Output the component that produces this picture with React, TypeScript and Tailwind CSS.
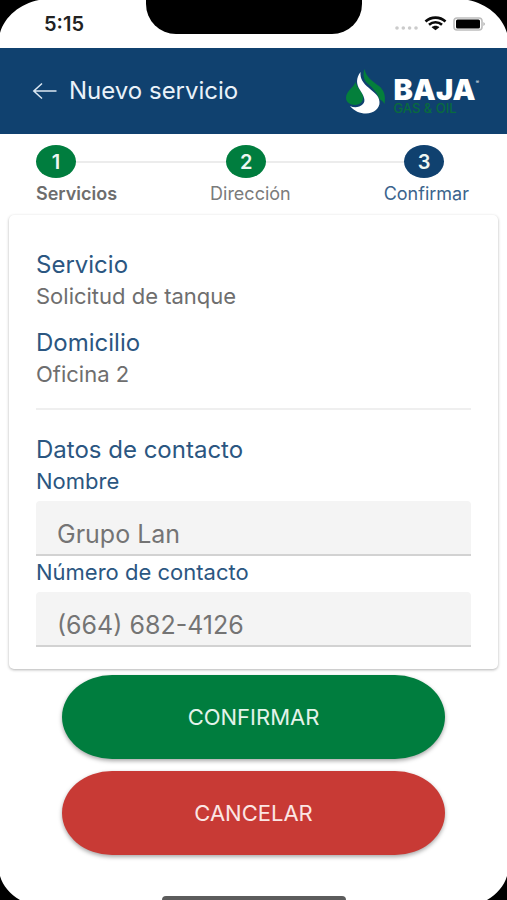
import { Fragment } from "react";

const steps = [
  { number: 1, label: "Servicios", circle: "bg-[#007d3e]", text: "font-semibold text-[#6d6d6d]" },
  { number: 2, label: "Dirección", circle: "bg-[#007d3e]", text: "text-[#7b7b7b]" },
  { number: 3, label: "Confirmar", circle: "bg-[#10416f]", text: "text-[#3b648d]" },
];

function StatusBar() {
  return (
    <div className="relative flex h-12 items-start justify-between pl-11 pr-[21px] pt-3">
      <span className="text-[20px] leading-6 font-semibold text-[#222]">5:15</span>
      <div className="absolute left-1/2 top-0 h-[34px] w-[216px] -translate-x-1/2 rounded-b-[30px] bg-black" />
      <svg width="92" height="24" viewBox="0 0 92 24" aria-hidden="true">
        <g fill="#cbcbcb">
          <circle cx="3" cy="16" r="1.800" />
          <circle cx="9.300" cy="16" r="1.800" />
          <circle cx="15.600" cy="16" r="1.800" />
          <circle cx="22" cy="16" r="1.800" />
        </g>
        <g fill="none" stroke="#0a0a0a" strokeWidth="2.600">
          <path d="M31.500 9.500C37 4.300 46 4.300 51.500 9.500" />
          <path d="M35 12.800C38.800 9.400 44.200 9.400 48 12.800" />
        </g>
        <path d="M37.600 15.200C39.800 13.200 43.200 13.200 45.400 15.200L41.500 18.300Z" fill="#0a0a0a" />
        <rect x="60" y="6" width="28" height="12" rx="3" fill="#fff" stroke="#bdbdbd" strokeWidth="1.600" />
        <rect x="62" y="7.600" width="24" height="9" rx="1.500" fill="#000" />
        <path d="M89.500 10Q92 12 89.500 14Z" fill="#9c9c9c" />
      </svg>
    </div>
  );
}

function Logo() {
  return (
    <div className="flex items-end gap-[7px]">
      <svg width="40" height="46" viewBox="0 0 40 46" aria-hidden="true">
        <path d="M9.500 14C8 19 0 23 0 30C0 34 4 37 9 37C14 37 18 33 17 28C16 23 11 20 9.500 14Z" fill="#047f3b" />
        <path d="M18.500 1C17 5 17 11 21 15C28 21 32 26 33 31C35 32 37 33 38.500 36C40 28 38 22 33 18C26 13 20 9 18.500 1Z" fill="#047f3b" />
        <path d="M14.500 4C10 10 10 16 14 22C18 28 20 33 17 36C13 40 8 40 4 38C8 43 14 45.500 20 45.500C28 45.500 34 40 33.500 34C33 27 28 25 23 20C17 15 14 11 14.500 4Z" fill="#fff" />
      </svg>
      <div>
        <div className="flex items-start">
          <span className="text-[29px] leading-6 font-black text-white">BAJA</span>
          <span className="text-[5px] leading-2 text-white">®</span>
        </div>
        <div className="text-[13px] leading-3 font-medium text-[#086b3e]">GAS &amp; OIL</div>
      </div>
    </div>
  );
}

function Header() {
  return (
    <header className="flex h-[86px] items-center justify-between bg-[#10416f] pl-8 pr-7">
      <div className="flex items-center gap-3">
        <button type="button" aria-label="Volver">
          <svg width="25" height="18" viewBox="0 0 25 18" fill="none" stroke="#dce8f3" strokeWidth="1.500" aria-hidden="true">
            <path d="M24.500 9H2M10 1.500L1.800 9L10 16.500" />
          </svg>
        </button>
        <h1 className="text-[24px] leading-7 text-[#eaf2f9]">Nuevo servicio</h1>
      </div>
      <Logo />
    </header>
  );
}

function Stepper() {
  return (
    <nav className="pt-[11px]" aria-label="Pasos">
      <div className="flex items-center pl-9 pr-[63px]">
        {steps.map((step, i) => (
          <Fragment key={step.number}>
            {i > 0 && <div className={i === 1 ? "h-[2px] flex-[12] bg-[#ececec]" : "h-[2px] flex-[11] bg-[#ececec]"} />}
            <span className={`flex h-[33px] w-10 items-center justify-center rounded-[50%] text-[20px] font-semibold text-[#eef6f2] ${step.circle}`}>
              {step.number}
            </span>
          </Fragment>
        ))}
      </div>
      <ol className="flex justify-between pl-9 pr-[38px] pt-1 text-[18px] leading-6">
        {steps.map((step) => (
          <li key={step.number} className={step.text}>{step.label}</li>
        ))}
      </ol>
    </nav>
  );
}

function Detail({ title, value }: { title: string; value: string }) {
  return (
    <div>
      <h2 className="text-[24px] leading-8 text-[#2b5681]">{title}</h2>
      <p className="text-[22px] leading-[30px] text-[#6e6e6e]">{value}</p>
    </div>
  );
}

function Field({ id, label, value, type }: { id: string; label: string; value: string; type: string }) {
  return (
    <div>
      <label htmlFor={id} className="block pb-1 text-[22px] leading-8 text-[#2b5681]">{label}</label>
      <input
        id={id}
        type={type}
        defaultValue={value}
        className="block h-[55px] w-full rounded-t-[4px] border-b-2 border-[#d2d2d2] bg-[#f4f4f4] px-[21px] pt-3 text-[25px] text-[#747474] outline-none"
      />
    </div>
  );
}

function Corners() {
  return (
    <>
      <svg className="absolute left-0 top-0" width="40" height="34" viewBox="0 0 40 34" aria-hidden="true">
        <path d="M0 0H39C20 4 5 16 0 33Z" />
      </svg>
      <svg className="absolute right-0 top-0" width="40" height="34" viewBox="0 0 40 34" aria-hidden="true">
        <path d="M40 0H1C20 4 35 16 40 33Z" />
      </svg>
      <svg className="absolute bottom-0 left-0" width="24" height="24" viewBox="0 0 24 24" aria-hidden="true">
        <path d="M0 24V0C3 10 10 18 20 24Z" />
      </svg>
      <svg className="absolute bottom-0 right-0" width="24" height="24" viewBox="0 0 24 24" aria-hidden="true">
        <path d="M24 24V0C21 10 14 18 4 24Z" />
      </svg>
    </>
  );
}

export default function App() {
  return (
    <div className="relative flex min-h-screen flex-col overflow-hidden bg-white font-['Inter',sans-serif]">
      <StatusBar />
      <Header />
      <Stepper />

      <main className="flex flex-1 flex-col pt-[9px]">
        <section className="mx-[9px] rounded-[5px] bg-white px-[27px] pb-[22px] pt-[34px] shadow-[0_1px_3px_rgba(0,0,0,0.3)]">
          <div className="flex flex-col gap-4 border-b-2 border-[#efefef] pb-[19px]">
            <Detail title="Servicio" value="Solicitud de tanque" />
            <Detail title="Domicilio" value="Oficina 2" />
          </div>
          <h2 className="pt-[25px] text-[24px] leading-[30px] text-[#2b5681]">Datos de contacto</h2>
          <Field id="nombre" label="Nombre" value="Grupo Lan" type="text" />
          <Field id="telefono" label="Número de contacto" value="(664) 682-4126" type="tel" />
        </section>

        <div className="flex flex-col gap-3 px-[62px] pt-[6px]">
          <button type="button" className="h-[84px] rounded-[50px/42px] bg-[#007d3e] text-[22px] text-[#e4f3ea] shadow-[0_2px_4px_rgba(0,0,0,0.35)]">
            CONFIRMAR
          </button>
          <button type="button" className="h-[84px] rounded-[50px/42px] bg-[#c83a35] text-[22px] text-[#fbe6e4] shadow-[0_2px_4px_rgba(0,0,0,0.35)]">
            CANCELAR
          </button>
        </div>

        <div className="mx-auto mt-auto h-1 w-[184px] rounded-t-[4px] bg-[#5c5c5c]" />
      </main>
      <Corners />
    </div>
  );
}
